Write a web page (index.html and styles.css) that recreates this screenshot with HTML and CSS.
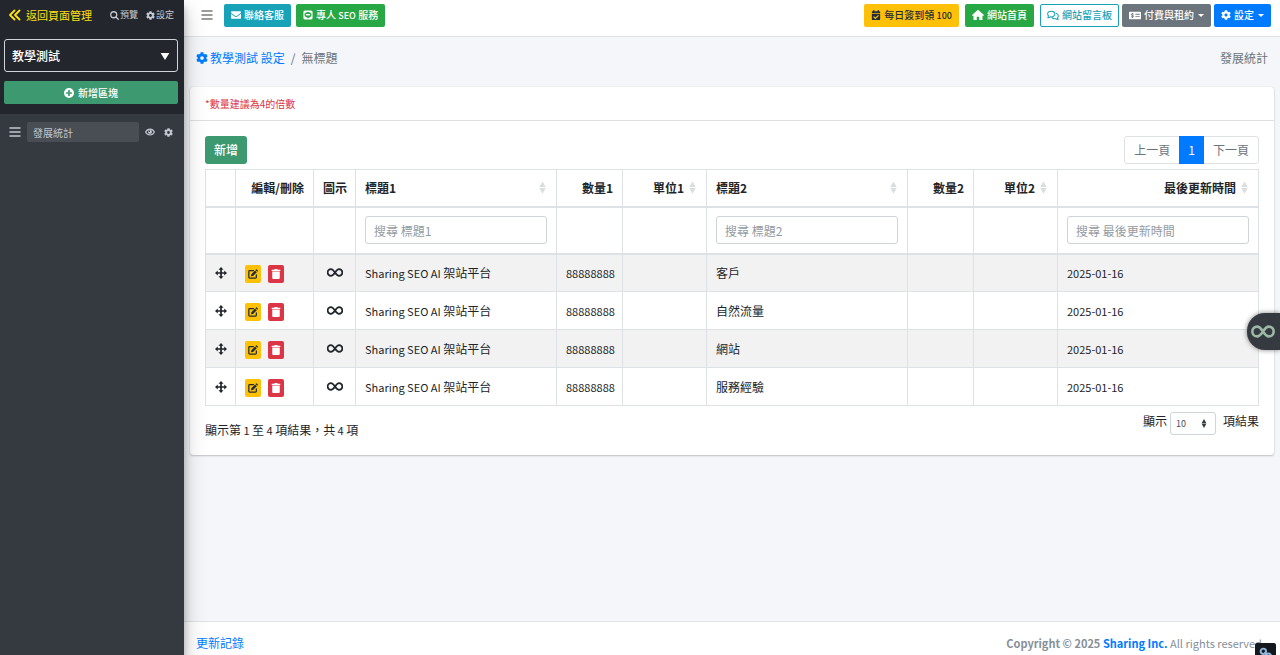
FILE: index.html
```html
<!DOCTYPE html>
<html lang="zh-Hant">
<head>
<meta charset="utf-8">
<meta name="viewport" content="width=device-width, initial-scale=1">
<title>發展統計</title>
<link rel="stylesheet" href="styles.css">
</head>
<body>
<svg class="sprite" aria-hidden="true">
  <symbol id="cog" viewBox="0 0 512 512"><path d="M487.4 315.7l-42.6-24.6c4.3-23.2 4.3-47 0-70.2l42.6-24.6c4.9-2.8 7.1-8.6 5.5-14-11.1-35.6-30-67.8-54.7-94.6-3.8-4.1-10-5.1-14.8-2.3L380.8 110c-17.9-15.4-38.5-27.3-60.8-35.1V25.8c0-5.6-3.9-10.5-9.4-11.7-36.7-8.2-74.3-7.8-109.2 0-5.5 1.2-9.4 6.1-9.4 11.7V75c-22.2 7.9-42.8 19.8-60.8 35.1L88.7 85.5c-4.9-2.8-11-1.9-14.8 2.3-24.7 26.7-43.6 58.9-54.7 94.6-1.7 5.4.6 11.2 5.5 14L67.3 221c-4.3 23.2-4.3 47 0 70.2l-42.6 24.6c-4.9 2.8-7.1 8.6-5.5 14 11.1 35.6 30 67.8 54.7 94.6 3.8 4.1 10 5.1 14.8 2.3l42.6-24.6c17.9 15.4 38.5 27.3 60.8 35.1v49.2c0 5.6 3.9 10.5 9.4 11.7 36.7 8.2 74.3 7.8 109.2 0 5.5-1.2 9.4-6.1 9.4-11.7v-49.2c22.2-7.9 42.8-19.8 60.8-35.1l42.6 24.6c4.9 2.8 11 1.9 14.8-2.3 24.7-26.7 43.6-58.9 54.7-94.6 1.5-5.5-.7-11.3-5.6-14.1zM256 336c-44.1 0-80-35.9-80-80s35.9-80 80-80 80 35.9 80 80-35.9 80-80 80z"/></symbol>
  <symbol id="back" viewBox="0 0 24 24"><path d="M11 3l-9 9 9 9M21 3l-9 9 9 9" fill="none" stroke="currentColor" stroke-width="3.600" stroke-linecap="round" stroke-linejoin="round"/></symbol>
  <symbol id="search" viewBox="0 0 24 24"><g fill="none" stroke="currentColor" stroke-width="3.400" stroke-linecap="round"><circle cx="10" cy="10" r="8"/><path d="M16 16l6 6"/></g></symbol>
  <symbol id="bars" viewBox="0 0 24 24"><path d="M2 4h20M2 12h20M2 20h20" fill="none" stroke="currentColor" stroke-width="3" stroke-linecap="round"/></symbol>
  <symbol id="plus" viewBox="0 0 24 24"><path fill-rule="evenodd" d="M12 0a12 12 0 1 0 0 24a12 12 0 0 0 0-24zM10 5h4v5h5v4h-5v5h-4v-5H5v-4h5z"/></symbol>
  <symbol id="eye" viewBox="0 0 24 24"><path d="M1.500 12C4 7 7.500 5 12 5s8 2 10.500 7C20 17 16.500 19 12 19S4 17 1.500 12z" fill="none" stroke="currentColor" stroke-width="2.600"/><circle cx="12" cy="12" r="4.800"/><circle cx="10.500" cy="10.200" r="1.600" fill="#343a40"/></symbol>
  <symbol id="mail" viewBox="0 0 24 24"><path d="M2 3h20a2 2 0 0 1 2 2v1.500l-10.500 8a2.500 2.500 0 0 1-3 0L0 6.500V5a2 2 0 0 1 2-2zM0 9.200l9.500 7.200a4 4 0 0 0 5 0L24 9.200V19a2 2 0 0 1-2 2H2a2 2 0 0 1-2-2z"/></symbol>
  <symbol id="chat" viewBox="0 0 24 24"><path fill-rule="evenodd" d="M5 1h14a4 4 0 0 1 4 4v14a4 4 0 0 1-4 4H5a4 4 0 0 1-4-4V5a4 4 0 0 1 4-4zM12 4.500c-4.700 0-8.500 3-8.500 6.800 0 3.300 2.900 6 7 6.700.8.200.7.700.5 2.300 5-2.300 9.500-5 9.500-9 0-3.800-3.800-6.800-8.500-6.800z"/><path d="M7 9.500h10v3.500H7z"/></symbol>
  <symbol id="calendar" viewBox="0 0 24 24"><path fill-rule="evenodd" d="M5 0h3v3h8V0h3v3h1a2 2 0 0 1 2 2v2H2V5a2 2 0 0 1 2-2h1zM2 9h20v13a2 2 0 0 1-2 2H4a2 2 0 0 1-2-2zM7 15l-2 2 5.500 5L19 14l-2-2-6.500 6z"/></symbol>
  <symbol id="home" viewBox="0 0 24 24"><path d="M12 1.500L24 12l-1.500 2L21 13v9h-6.500v-6.500h-5V22H3v-9l-1.500 1L0 12z"/></symbol>
  <symbol id="comments" viewBox="0 0 28 24"><g fill="none" stroke="currentColor" stroke-width="2.400" stroke-linejoin="round"><path d="M10 2c-5 0-8.500 3-8.500 6.500 0 2 1 3.500 2 4.500L2 17c2.500 0 4.500-1 5.500-2 6 1.200 11-2 11-6.500C18.500 5 15 2 10 2z"/><path d="M21 7c3.500 1 5.500 3 5.500 6 0 2-1 3.500-2 4.500l1.500 4c-2.500 0-4.500-1-5.500-2-4 .8-8-.5-9.500-3.500"/></g></symbol>
  <symbol id="money" viewBox="0 0 28 24"><path fill-rule="evenodd" d="M2 3h24a2 2 0 0 1 2 2v14a2 2 0 0 1-2 2H2a2 2 0 0 1-2-2V5a2 2 0 0 1 2-2zM15 8v2h10V8zM15 13v2h10v-2zM7 6v1.500C3.500 8 4 12 7.500 12.700c2 .6 1.300 1.800-.5 1.600l-2-.6-.5 2 2.500.7V18h2v-1.600c3.500-.8 3-4.600-.5-5.400-2-.5-1-1.600.5-1.400l1.500.5.5-2L9 7.500V6z"/></symbol>
  <symbol id="move" viewBox="0 0 24 24"><path d="M12 0l5 5.500h-3.300v4.800h4.800V7l5.500 5-5.500 5v-3.300h-4.800v4.800H17L12 24l-5-5.500h3.300v-4.800H5.500V17L0 12l5.500-5v3.300h4.800V5.500H7z"/></symbol>
  <symbol id="edit" viewBox="0 0 24 24"><path d="M13 4H4a2 2 0 0 0-2 2v14a2 2 0 0 0 2 2h14a2 2 0 0 0 2-2v-6" fill="none" stroke="currentColor" stroke-width="3" stroke-linecap="round"/><path d="M17 3.500l4 4L12 16.500l-5 1 1-5zM18 2.500l1.200-1.200a1.500 1.500 0 0 1 2.200 0l2 2a1.500 1.500 0 0 1 0 2.200L22 6.600z"/></symbol>
  <symbol id="trash" viewBox="0 0 448 512"><path d="M32 464a48 48 0 0 0 48 48h288a48 48 0 0 0 48-48V128H32zM432 32H312l-9.400-18.700A24 24 0 0 0 281.100 0H166.800a23.700 23.700 0 0 0-21.400 13.300L136 32H16A16 16 0 0 0 0 48v32a16 16 0 0 0 16 16h416a16 16 0 0 0 16-16V48a16 16 0 0 0-16-16z"/></symbol>
  <symbol id="infinity" viewBox="0 0 32 18"><path d="M16 9C13 4.500 11 2.200 8 2.200a6.800 6.800 0 0 0 0 13.600C11 15.800 13 13.500 16 9s5-6.800 8-6.800a6.800 6.800 0 0 1 0 13.600C21 15.800 19 13.500 16 9z" fill="none" stroke="currentColor" stroke-width="3.600"/></symbol>
  <symbol id="sort" viewBox="0 0 8 14"><path d="M4 0l3.700 6.500H.3zM4 14L.3 7.500h7.400z"/></symbol>
  <symbol id="caret" viewBox="0 0 10 8"><path d="M0 0h10L5 8z"/></symbol>
  <symbol id="drop" viewBox="0 0 8 4"><path d="M0 0h8L4 4z"/></symbol>
  <symbol id="link" viewBox="0 0 24 24"><g fill="none" stroke="currentColor" stroke-width="3.600"><circle cx="8" cy="8" r="5"/><circle cx="17" cy="17" r="5"/><path d="M10 10l5 5"/></g></symbol>
</svg>

<div class="app">
  <aside class="sidebar">
    <div class="side-top">
      <nav class="side-links">
        <a class="back" href="#"><svg class="icon icon-lg"><use href="#back"/></svg>返回頁面管理</a>
        <a href="#"><svg class="icon icon-sm"><use href="#search"/></svg>預覽</a>
        <a href="#"><svg class="icon icon-sm"><use href="#cog"/></svg>設定</a>
      </nav>
      <div class="page-picker">
        <select aria-label="頁面"><option>教學測試</option></select>
        <svg class="picker-caret"><use href="#caret"/></svg>
      </div>
      <button class="add-block" type="button"><svg class="icon"><use href="#plus"/></svg>新增區塊</button>
    </div>
    <div class="block-row">
      <svg class="icon icon-lg"><use href="#bars"/></svg>
      <input type="text" value="發展統計" aria-label="區塊名稱">
      <button class="plain" type="button" aria-label="顯示"><svg class="icon"><use href="#eye"/></svg></button>
      <button class="plain" type="button" aria-label="區塊設定"><svg class="icon icon-sm"><use href="#cog"/></svg></button>
    </div>
  </aside>

  <div class="content">
    <header class="topbar">
      <button class="plain menu" type="button" aria-label="選單"><svg class="icon icon-lg"><use href="#bars"/></svg></button>
      <a class="btn info" href="#"><svg class="icon"><use href="#mail"/></svg>聯絡客服</a>
      <a class="btn success" href="#"><svg class="icon"><use href="#chat"/></svg><span>專人 <span class="latin-sm">SEO</span> 服務</span></a>
      <div class="top-right">
        <a class="btn warning" href="#"><svg class="icon"><use href="#calendar"/></svg><span>每日簽到領 <span class="latin-sm">100</span></span></a>
        <a class="btn success" href="#"><svg class="icon icon-lg"><use href="#home"/></svg>網站首頁</a>
        <a class="btn outline" href="#"><svg class="icon icon-wide"><use href="#comments"/></svg>網站留言板</a>
        <div class="pair">
          <button class="btn secondary" type="button"><svg class="icon icon-wide"><use href="#money"/></svg>付費與租約<svg class="drop"><use href="#drop"/></svg></button>
          <button class="btn primary" type="button"><svg class="icon"><use href="#cog"/></svg>設定<svg class="drop"><use href="#drop"/></svg></button>
        </div>
      </div>
    </header>

    <main>
      <div class="page-head">
        <nav class="crumbs"><a href="#"><svg class="icon icon-lg"><use href="#cog"/></svg>教學測試 設定</a><span class="slash">/</span><span>無標題</span></nav>
        <span>發展統計</span>
      </div>
      <section class="card">
        <p class="note">*數量建議為4的倍數</p>
        <div class="card-body">
          <div class="tools">
            <button class="new" type="button">新增</button>
            <nav class="pages" aria-label="分頁"><a href="#">上一頁</a><a class="current" href="#">1</a><a href="#">下一頁</a></nav>
          </div>
          <table>
            <colgroup><col class="c-move"><col class="c-edit"><col class="c-icon"><col><col class="c-num"><col class="c-unit"><col><col class="c-num"><col class="c-unit"><col></colgroup>
            <thead>
              <tr>
                <th></th>
                <th class="end">編輯/刪除</th>
                <th>圖示</th>
                <th><div class="sortable">標題1<svg class="sort"><use href="#sort"/></svg></div></th>
                <th class="end">數量1</th>
                <th><div class="sortable to-end">單位1<svg class="sort"><use href="#sort"/></svg></div></th>
                <th><div class="sortable">標題2<svg class="sort"><use href="#sort"/></svg></div></th>
                <th class="end">數量2</th>
                <th><div class="sortable to-end">單位2<svg class="sort"><use href="#sort"/></svg></div></th>
                <th><div class="sortable to-end">最後更新時間<svg class="sort"><use href="#sort"/></svg></div></th>
              </tr>
              <tr class="filters">
                <td></td><td></td><td></td>
                <td><input type="text" placeholder="搜尋 標題1" aria-label="搜尋 標題1"></td>
                <td></td><td></td>
                <td><input type="text" placeholder="搜尋 標題2" aria-label="搜尋 標題2"></td>
                <td></td><td></td>
                <td><input type="text" placeholder="搜尋 最後更新時間" aria-label="搜尋 最後更新時間"></td>
              </tr>
            </thead>
            <tbody>
              <tr>
                <td class="mid"><svg class="icon icon-lg"><use href="#move"/></svg></td>
                <td><div class="acts"><button class="edit" type="button" aria-label="編輯"><svg class="icon"><use href="#edit"/></svg></button><button class="del" type="button" aria-label="刪除"><svg class="icon"><use href="#trash"/></svg></button></div></td>
                <td class="mid"><svg class="inf"><use href="#infinity"/></svg></td>
                <td><span class="latin">Sharing SEO AI </span>架站平台</td><td class="end latin">88888888</td><td></td><td>客戶</td><td></td><td></td><td class="latin">2025-01-16</td>
              </tr>
              <tr>
                <td class="mid"><svg class="icon icon-lg"><use href="#move"/></svg></td>
                <td><div class="acts"><button class="edit" type="button" aria-label="編輯"><svg class="icon"><use href="#edit"/></svg></button><button class="del" type="button" aria-label="刪除"><svg class="icon"><use href="#trash"/></svg></button></div></td>
                <td class="mid"><svg class="inf"><use href="#infinity"/></svg></td>
                <td><span class="latin">Sharing SEO AI </span>架站平台</td><td class="end latin">88888888</td><td></td><td>自然流量</td><td></td><td></td><td class="latin">2025-01-16</td>
              </tr>
              <tr>
                <td class="mid"><svg class="icon icon-lg"><use href="#move"/></svg></td>
                <td><div class="acts"><button class="edit" type="button" aria-label="編輯"><svg class="icon"><use href="#edit"/></svg></button><button class="del" type="button" aria-label="刪除"><svg class="icon"><use href="#trash"/></svg></button></div></td>
                <td class="mid"><svg class="inf"><use href="#infinity"/></svg></td>
                <td><span class="latin">Sharing SEO AI </span>架站平台</td><td class="end latin">88888888</td><td></td><td>網站</td><td></td><td></td><td class="latin">2025-01-16</td>
              </tr>
              <tr>
                <td class="mid"><svg class="icon icon-lg"><use href="#move"/></svg></td>
                <td><div class="acts"><button class="edit" type="button" aria-label="編輯"><svg class="icon"><use href="#edit"/></svg></button><button class="del" type="button" aria-label="刪除"><svg class="icon"><use href="#trash"/></svg></button></div></td>
                <td class="mid"><svg class="inf"><use href="#infinity"/></svg></td>
                <td><span class="latin">Sharing SEO AI </span>架站平台</td><td class="end latin">88888888</td><td></td><td>服務經驗</td><td></td><td></td><td class="latin">2025-01-16</td>
              </tr>
            </tbody>
          </table>
          <div class="table-foot">
            <p class="summary">顯示第<span class="latin"> 1 </span>至<span class="latin"> 4 </span>項結果，共<span class="latin"> 4 </span>項</p>
            <label class="length">顯示<span class="length-box"><select><option>10</option></select><svg class="length-sort"><use href="#sort"/></svg></span>項結果</label>
          </div>
        </div>
      </section>
    </main>

    <footer>
      <a href="#">更新記錄</a>
      <p><strong>Copyright © 2025 <a href="#">Sharing Inc.</a></strong> All rights reserved.</p>
    </footer>
  </div>
</div>
<button class="side-tab" type="button" aria-label="工具"><svg><use href="#infinity"/></svg></button>
<button class="corner" type="button" aria-label="連結"><svg><use href="#link"/></svg></button>
</body>
</html>
```
FILE: styles.css
```css
* { box-sizing: border-box; }
body {
  margin: 0;
  font: 12px/18px "Noto Sans CJK TC", sans-serif;
  color: #212529;
  background: #f4f6f9;
}
a { color: #007bff; text-decoration: none; }
p { margin: 0; }
button, input, select { font: inherit; margin: 0; }
svg { display: block; fill: currentColor; flex: none; }
.sprite { position: absolute; width: 0; height: 0; }
.icon { width: 10px; height: 10px; }
.icon-sm { width: 9px; height: 9px; }
.icon-lg { width: 12px; height: 12px; }
.icon-wide { width: 12px; height: 11px; }
.latin { font-size: 11px; }
.latin-sm { font-size: 9px; }
.plain { padding: 0; border: 0; background: none; color: inherit; }

.app { display: flex; height: 100vh; overflow: hidden; }

.sidebar {
  flex: none;
  width: 184px;
  background: #343a40;
  color: #c2c7d0;
  box-shadow: 0 10px 20px rgba(0, 0, 0, .25), 0 7px 7px rgba(0, 0, 0, .22);
  z-index: 1;
}
.side-top { padding: 6px 6px 10px 4px; background: #23272d; }
.side-links { display: flex; align-items: center; gap: 8px; padding: 0 4px 0 5px; font-size: 9px; }
.side-links a { display: flex; align-items: center; gap: 1px; color: #c2c7d0; }
.side-links .back { gap: 5px; margin-right: auto; font-size: 11px; color: #fde112; }
.page-picker { position: relative; margin-top: 15px; }
.page-picker select {
  display: block;
  width: 100%;
  height: 33px;
  padding: 0 7px;
  border: 1px solid #ced4da;
  border-radius: 3px;
  background: #23272d;
  color: #fff;
  font-weight: 500;
  appearance: none;
}
.picker-caret { position: absolute; right: 8px; top: 14px; width: 10px; height: 7px; color: #fff; pointer-events: none; }
.add-block {
  display: flex;
  align-items: center;
  justify-content: center;
  gap: 4px;
  width: 100%;
  height: 23px;
  margin-top: 9px;
  border: 0;
  border-radius: 2px;
  background: #3d9970;
  color: #fff;
  font-size: 10px;
  font-weight: 500;
}
.block-row { display: flex; align-items: center; gap: 6px; padding: 8px 11px 0 9px; }
.block-row input {
  flex: 1;
  min-width: 0;
  height: 20px;
  padding: 0 6px;
  border: 0;
  border-radius: 2px;
  background: #494e54;
  color: #c2c7d0;
  font-size: 10px;
}
.block-row .plain + .plain { margin-left: 3px; }

.content { display: flex; flex: 1; min-width: 0; flex-direction: column; }
.topbar {
  display: flex;
  align-items: center;
  gap: 5px;
  height: 37px;
  padding: 0 9px 6px 17px;
  border-bottom: 1px solid #dee2e6;
  background: #fff;
}
.menu { margin-right: 6px; color: #7b7b7b; }
.top-right { display: flex; align-items: center; gap: 6px; margin-left: auto; }
.pair { display: flex; gap: 3px; margin-left: -3px; }
.btn {
  display: flex;
  align-items: center;
  gap: 3px;
  height: 23px;
  padding: 0 6px;
  border: 1px solid transparent;
  border-radius: 2px;
  color: #fff;
  font-size: 10px;
  font-weight: 500;
  white-space: nowrap;
}
.info { background: #17a2b8; }
.success { background: #28a745; }
.warning { background: #ffc107; color: #1f2d3d; }
.outline { border-color: #17a2b8; color: #17a2b8; }
.secondary { background: #6c757d; }
.primary { background: #007bff; }
.drop { width: 6px; height: 3px; margin-left: 1px; }

main { flex: 1; padding: 0 6px; }
.page-head { display: flex; justify-content: space-between; padding: 12px 6px 20px; color: #6c757d; }
.crumbs { display: flex; gap: 6px; }
.crumbs a { display: flex; align-items: center; gap: 2px; }
.card { border-radius: 3px; background: #fff; box-shadow: 0 0 1px rgba(0, 0, 0, .2), 0 1px 2px rgba(0, 0, 0, .2); }
.note { padding: 8px 15px 7px; border-bottom: 1px solid #dfdfdf; color: #dc3545; font-size: 10px; }
.card-body { padding: 15px 15px 16px; }
.tools { display: flex; align-items: center; justify-content: space-between; margin-bottom: 5px; }
.new { height: 28px; padding: 0 9px; border: 0; border-radius: 3px; background: #3d9970; color: #fff; font-weight: 500; }
.pages { display: flex; border: 1px solid #dee2e6; border-radius: 3px; }
.pages a { padding: 4px 9px; color: #6c757d; }
.pages .current { margin: -1px 0; padding: 5px 9px; background: #007bff; color: #fff; }

table { width: 100%; border-collapse: collapse; table-layout: fixed; }
th, td { height: 38px; padding: 0 9px; border: 1px solid #dee2e6; text-align: left; white-space: nowrap; }
thead th { height: 37px; border-bottom-width: 2px; }
.filters td { height: 47px; border-bottom-width: 2px; }
.end { text-align: right; }
.mid svg { margin: 0 auto; }
td.mid { padding: 0; }
.c-move { width: 30px; }
.c-edit { width: 78px; }
.c-icon { width: 42px; }
.c-num { width: 66px; }
.c-unit { width: 84px; }
.sortable { display: flex; align-items: center; justify-content: space-between; }
.to-end { justify-content: flex-end; gap: 5px; }
.sort { width: 7px; height: 13px; margin-right: 1px; color: #dcddde; }
.filters input {
  display: block;
  width: 100%;
  height: 28px;
  padding: 0 8px;
  border: 1px solid #ced4da;
  border-radius: 3px;
  background: #fff;
}
.filters input::placeholder { color: #939ba2; opacity: 1; }
tbody tr:nth-child(odd) { background: #f2f2f2; }
.acts { display: flex; gap: 7px; }
.acts button { display: grid; place-items: center; width: 16px; height: 18px; margin-top: 2px; padding: 0; border: 0; border-radius: 2px; }
.edit { background: #ffc107; color: #1f2d3d; }
.del { background: #dc3545; color: #fff; }
.inf { width: 16px; height: 9px; }

.table-foot { display: flex; align-items: flex-start; justify-content: space-between; }
.summary { padding-top: 15px; }
.length { display: flex; gap: 3px; padding-top: 6px; }
.length-box { position: relative; margin-right: 4px; }
.length select {
  display: block;
  width: 46px;
  height: 23px;
  padding: 0 5px;
  border: 1px solid #ced4da;
  border-radius: 3px;
  background: #fff;
  color: #495057;
  font-size: 9px;
  appearance: none;
}
.length-sort { position: absolute; right: 9px; top: 7px; width: 6px; height: 9px; color: #343a40; pointer-events: none; }

footer {
  display: flex;
  justify-content: space-between;
  height: 34px;
  padding: 12px 15px 0 12px;
  border-top: 1px solid #dee2e6;
  background: #fff;
  color: #869099;
}
footer p { font-size: 11px; }

.side-tab {
  position: fixed;
  right: 0;
  top: 313px;
  z-index: 2;
  width: 33px;
  height: 37px;
  padding: 0 4px;
  border: 0;
  border-radius: 18px 0 0 18px;
  background: #343a40;
  color: #9db8a4;
  box-shadow: 0 0 5px rgba(0, 0, 0, .5);
}
.side-tab svg { width: 24px; height: 13px; }
.corner {
  position: fixed;
  right: 4px;
  bottom: -9px;
  z-index: 2;
  width: 21px;
  height: 21px;
  padding: 4px;
  border: 0;
  border-radius: 2px;
  background: #15191d;
  color: #8fb6e0;
}
.corner svg { width: 13px; height: 13px; }
```
